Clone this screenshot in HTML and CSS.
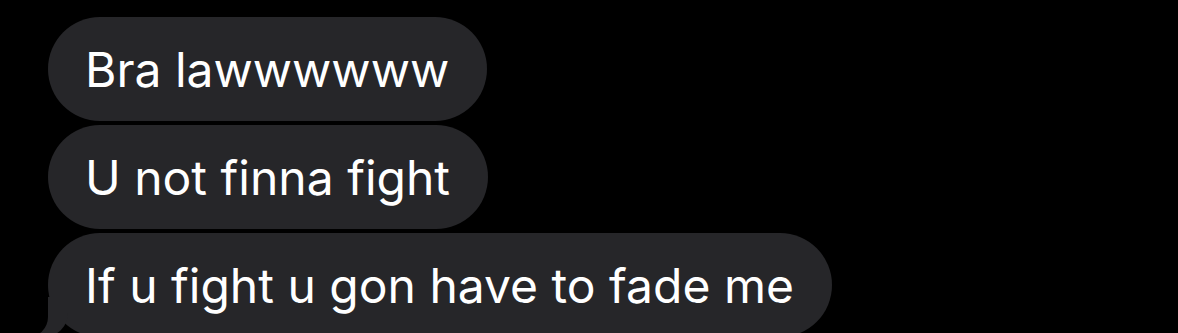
FILE: index.html
```html
<!DOCTYPE html>
<html lang="en">
<head>
<meta charset="utf-8">
<link rel="stylesheet" href="styles.css">
</head>
<body>
<div class="thread">
  <div class="bubble">Bra lawwwwww</div>
  <div class="bubble">U not finna fight</div>
  <div class="bubble bubble-tail">If u fight u gon have to fade me</div>
</div>
</body>
</html>
```
FILE: styles.css
```css
html, body {
  margin: 0;
  padding: 0;
  background: #000;
  height: 100%;
  overflow: hidden;
}
.thread {
  display: flex;
  flex-direction: column;
  align-items: flex-start;
  gap: 4px;
  padding: 17px 0 0 48px;
}
.bubble {
  position: relative;
  box-sizing: border-box;
  height: 104px;
  padding: 0 38px 0 37px;
  border-radius: 52px;
  background: #262629;
  color: #fff;
  font-family: Inter, "Noto Sans", sans-serif;
  font-size: 48px;
  display: flex;
  align-items: center;
  white-space: nowrap;
}
.bubble-tail::before {
  content: "";
  position: absolute;
  left: -20px;
  bottom: 0;
  width: 40px;
  height: 40px;
  background: #262629;
  border-bottom-right-radius: 24px;
}
.bubble-tail::after {
  content: "";
  position: absolute;
  left: -20px;
  bottom: 0;
  width: 20px;
  height: 40px;
  background: #000;
  border-bottom-right-radius: 20px;
}
```
